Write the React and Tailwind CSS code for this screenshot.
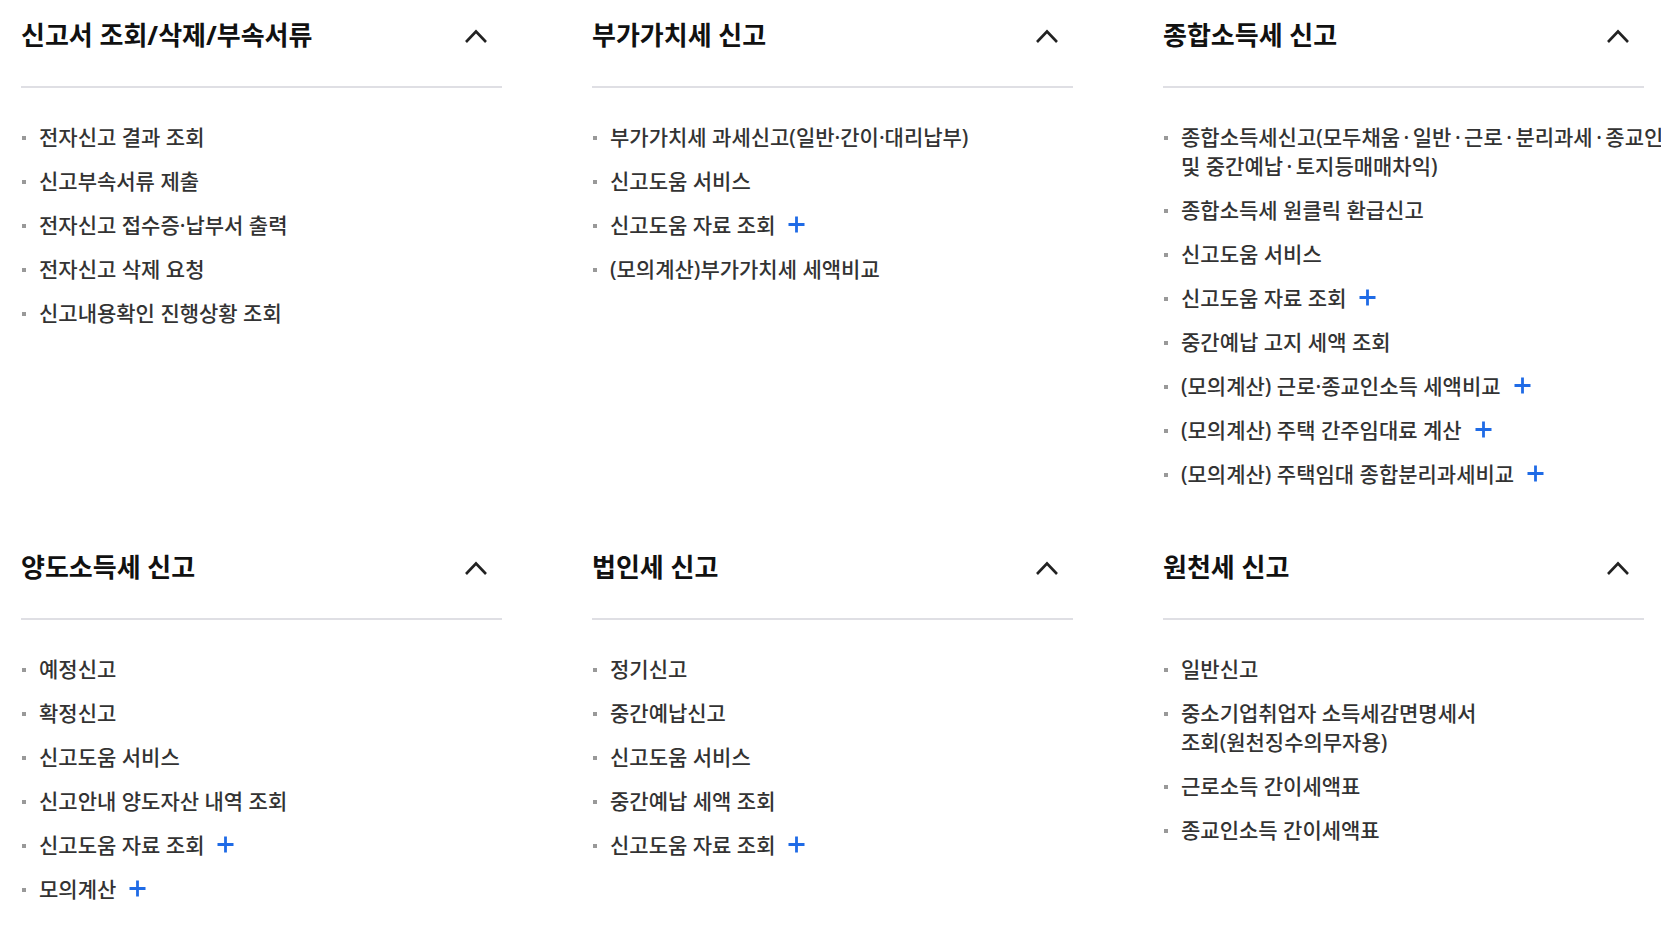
import { useState } from 'react';

const DOT = '\u2009·\u2009';

const SECTIONS = [
  {
    title: '신고서 조회/삭제/부속서류',
    items: [
      { label: '전자신고 결과 조회' },
      { label: '신고부속서류 제출' },
      { label: '전자신고 접수증·납부서 출력' },
      { label: '전자신고 삭제 요청' },
      { label: '신고내용확인 진행상황 조회' },
    ],
  },
  {
    title: '부가가치세 신고',
    items: [
      { label: '부가가치세 과세신고(일반·간이·대리납부)' },
      { label: '신고도움 서비스' },
      { label: '신고도움 자료 조회', more: true },
      { label: '(모의계산)부가가치세 세액비교' },
    ],
  },
  {
    title: '종합소득세 신고',
    items: [
      { label: [`종합소득세신고(모두채움${DOT}일반${DOT}근로${DOT}분리과세${DOT}종교인`, '및', `중간예납${DOT}토지등매매차익)`] },
      { label: '종합소득세 원클릭 환급신고' },
      { label: '신고도움 서비스' },
      { label: '신고도움 자료 조회', more: true },
      { label: '중간예납 고지 세액 조회' },
      { label: '(모의계산) 근로·종교인소득 세액비교', more: true },
      { label: '(모의계산) 주택 간주임대료 계산', more: true },
      { label: '(모의계산) 주택임대 종합분리과세비교', more: true },
    ],
  },
  {
    title: '양도소득세 신고',
    items: [
      { label: '예정신고' },
      { label: '확정신고' },
      { label: '신고도움 서비스' },
      { label: '신고안내 양도자산 내역 조회' },
      { label: '신고도움 자료 조회', more: true },
      { label: '모의계산', more: true },
    ],
  },
  {
    title: '법인세 신고',
    items: [
      { label: '정기신고' },
      { label: '중간예납신고' },
      { label: '신고도움 서비스' },
      { label: '중간예납 세액 조회' },
      { label: '신고도움 자료 조회', more: true },
    ],
  },
  {
    title: '원천세 신고',
    items: [
      { label: '일반신고' },
      { label: ['중소기업취업자', '소득세감면명세서', '조회(원천징수의무자용)'] },
      { label: '근로소득 간이세액표' },
      { label: '종교인소득 간이세액표' },
    ],
  },
];

function Chevron({ open }) {
  return (
    <svg width="24" height="16" viewBox="0 0 24 16" fill="none" className={open ? '' : 'rotate-180'}>
      <path d="M2 14 L12 3.5 L22 14" stroke="#222" strokeWidth="2.6" strokeLinejoin="miter" />
    </svg>
  );
}

function PlusIcon() {
  return (
    <svg width="17" height="17" viewBox="0 0 17 17" className="shrink-0">
      <path d="M8.5 0.5 V16.5 M0.5 8.5 H16.5" stroke="#1f6be6" strokeWidth="2.8" />
    </svg>
  );
}

// words kept whole, as the site does with word-break: keep-all
function Label({ label }) {
  if (typeof label === 'string') return label;
  return label.map((w, i) => (
    <span key={i}>
      {i > 0 && ' '}
      <span className="whitespace-nowrap">{w}</span>
    </span>
  ));
}

function Section({ title, items }) {
  const [open, setOpen] = useState(true);
  return (
    <div className="min-w-0">
      <button
        type="button"
        onClick={() => setOpen(!open)}
        className="w-full flex items-center justify-between pt-[17px] pb-[33px] border-b-2 border-[#dfdfe4] text-left"
      >
        <h2 className="text-[26px] leading-[36px] font-bold text-[#111]">{title}</h2>
        <span className="mr-[14px] mt-[2px]"><Chevron open={open} /></span>
      </button>
      {open && (
        <ul className="pt-[35px] flex flex-col gap-[15px]">
          {items.map((it, i) => (
            <li key={i} className="relative pl-[18px] text-[21px] leading-[29px] font-medium text-[#333] break-keep">
              <span className="absolute left-[1px] top-[13px] w-[4px] h-[4px] bg-[#999]" />
              <a href="#" className="inline">
                <Label label={it.label} />
              </a>
              {it.more && (
                <span className="inline-flex align-middle ml-[13px] -mt-[5px]">
                  <PlusIcon />
                </span>
              )}
            </li>
          ))}
        </ul>
      )}
    </div>
  );
}

export default function App() {
  return (
    <div
      className="w-full min-h-screen overflow-hidden bg-white"
      style={{ fontFamily: '"Noto Sans", "Noto Sans CJK KR", sans-serif' }}
    >
      <div className="pl-[21px] grid grid-cols-[481px_481px_481px] gap-x-[90px] gap-y-[43px]">
        {SECTIONS.map((s) => (
          <Section key={s.title} {...s} />
        ))}
      </div>
    </div>
  );
}
